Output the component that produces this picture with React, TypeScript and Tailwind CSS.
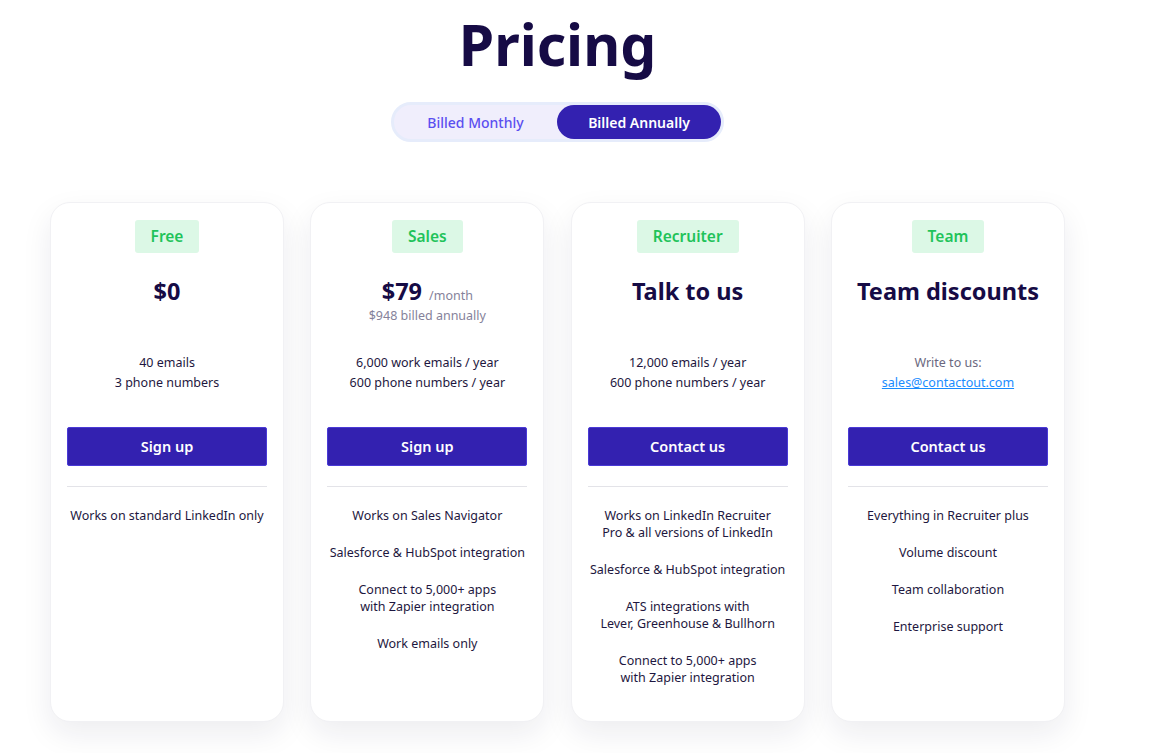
import React from "react";

interface Plan {
  name: string;
  price: string;
  per?: string;
  note?: string;
  limits: React.ReactNode;
  cta: string;
  features: string[][];
}

const plans: Plan[] = [
  {
    name: "Free",
    price: "$0",
    limits: (
      <>
        <p>40 emails</p>
        <p>3 phone numbers</p>
      </>
    ),
    cta: "Sign up",
    features: [["Works on standard LinkedIn only"]],
  },
  {
    name: "Sales",
    price: "$79",
    per: "/month",
    note: "$948 billed annually",
    limits: (
      <>
        <p>6,000 work emails / year</p>
        <p>600 phone numbers / year</p>
      </>
    ),
    cta: "Sign up",
    features: [
      ["Works on Sales Navigator"],
      ["Salesforce & HubSpot integration"],
      ["Connect to 5,000+ apps", "with Zapier integration"],
      ["Work emails only"],
    ],
  },
  {
    name: "Recruiter",
    price: "Talk to us",
    limits: (
      <>
        <p>12,000 emails / year</p>
        <p>600 phone numbers / year</p>
      </>
    ),
    cta: "Contact us",
    features: [
      ["Works on LinkedIn Recruiter", "Pro & all versions of LinkedIn"],
      ["Salesforce & HubSpot integration"],
      ["ATS integrations with", "Lever, Greenhouse & Bullhorn"],
      ["Connect to 5,000+ apps", "with Zapier integration"],
    ],
  },
  {
    name: "Team",
    price: "Team discounts",
    limits: (
      <>
        <p className="text-[#6b6880]">Write to us:</p>
        <p>
          <a href="#" className="text-[#1a8cff] underline">
            sales@contactout.com
          </a>
        </p>
      </>
    ),
    cta: "Contact us",
    features: [
      ["Everything in Recruiter plus"],
      ["Volume discount"],
      ["Team collaboration"],
      ["Enterprise support"],
    ],
  },
];

const PlanCard: React.FC<{ plan: Plan }> = ({ plan }) => (
  <div className="w-[234px] h-[520px] bg-white rounded-[20px] border border-[#f1f1f4] shadow-[0_12px_30px_rgba(30,30,60,0.08)] px-[16px] flex flex-col items-center">
    <span className="mt-[17px] h-[33px] px-[16px] flex items-center rounded-[3px] bg-[#dcf8e6] text-[#1fc35a] text-[15.5px] font-semibold">
      {plan.name}
    </span>
    <div className="mt-[22px] h-[78px] flex flex-col items-center">
      <div className="flex items-baseline h-[32px] leading-[32px]">
        <span className="text-[23.5px] font-bold text-[#160b45]">{plan.price}</span>
        {plan.per && <span className="ml-[7px] text-[12.5px] text-[#85829a]">{plan.per}</span>}
      </div>
      {plan.note && <p className="text-[12.5px] leading-[18px] text-[#85829a]">{plan.note}</p>}
    </div>
    <div className="h-[40px] text-[12.5px] leading-[20px] text-[#1e1740] text-center whitespace-nowrap">{plan.limits}</div>
    <button className="mt-[34px] w-full h-[39px] rounded-[2px] bg-[#3321b0] border border-[#4a3ad6] text-white text-[14.5px] font-semibold">
      {plan.cta}
    </button>
    <div className="mt-[20px] w-full h-px bg-[#e3e3e8]" />
    <ul className="mt-[20px] flex flex-col gap-[20px] text-[12.5px] leading-[17px] text-[#1e1740] text-center whitespace-nowrap">
      {plan.features.map((f, i) => (
        <li key={i}>
          {f.map((line, j) => (
            <p key={j}>{line}</p>
          ))}
        </li>
      ))}
    </ul>
  </div>
);

export default function App() {
  return (
    <div className="min-h-screen bg-white font-['Noto_Sans',sans-serif] pl-[50px]">
      <div className="w-[1015px] flex flex-col items-center">
        <h1 className="mt-[6px] text-[57px] leading-[76px] font-bold text-[#160b45]">Pricing</h1>
        <div className="mt-[20px] w-[333px] h-[40px] rounded-full bg-[#f0eefc] border-[3px] border-[#e6ecfb] flex items-center">
          <button className="flex-1 h-full text-[14px] font-medium text-[#5b4ff0]">Billed Monthly</button>
          <button className="w-[164px] h-full rounded-full bg-[#3321b0] text-[14px] font-semibold text-white">
            Billed Annually
          </button>
        </div>
        <div className="mt-[60px] w-full flex justify-between">
          {plans.map((p) => (
            <PlanCard key={p.name} plan={p} />
          ))}
        </div>
      </div>
    </div>
  );
}
